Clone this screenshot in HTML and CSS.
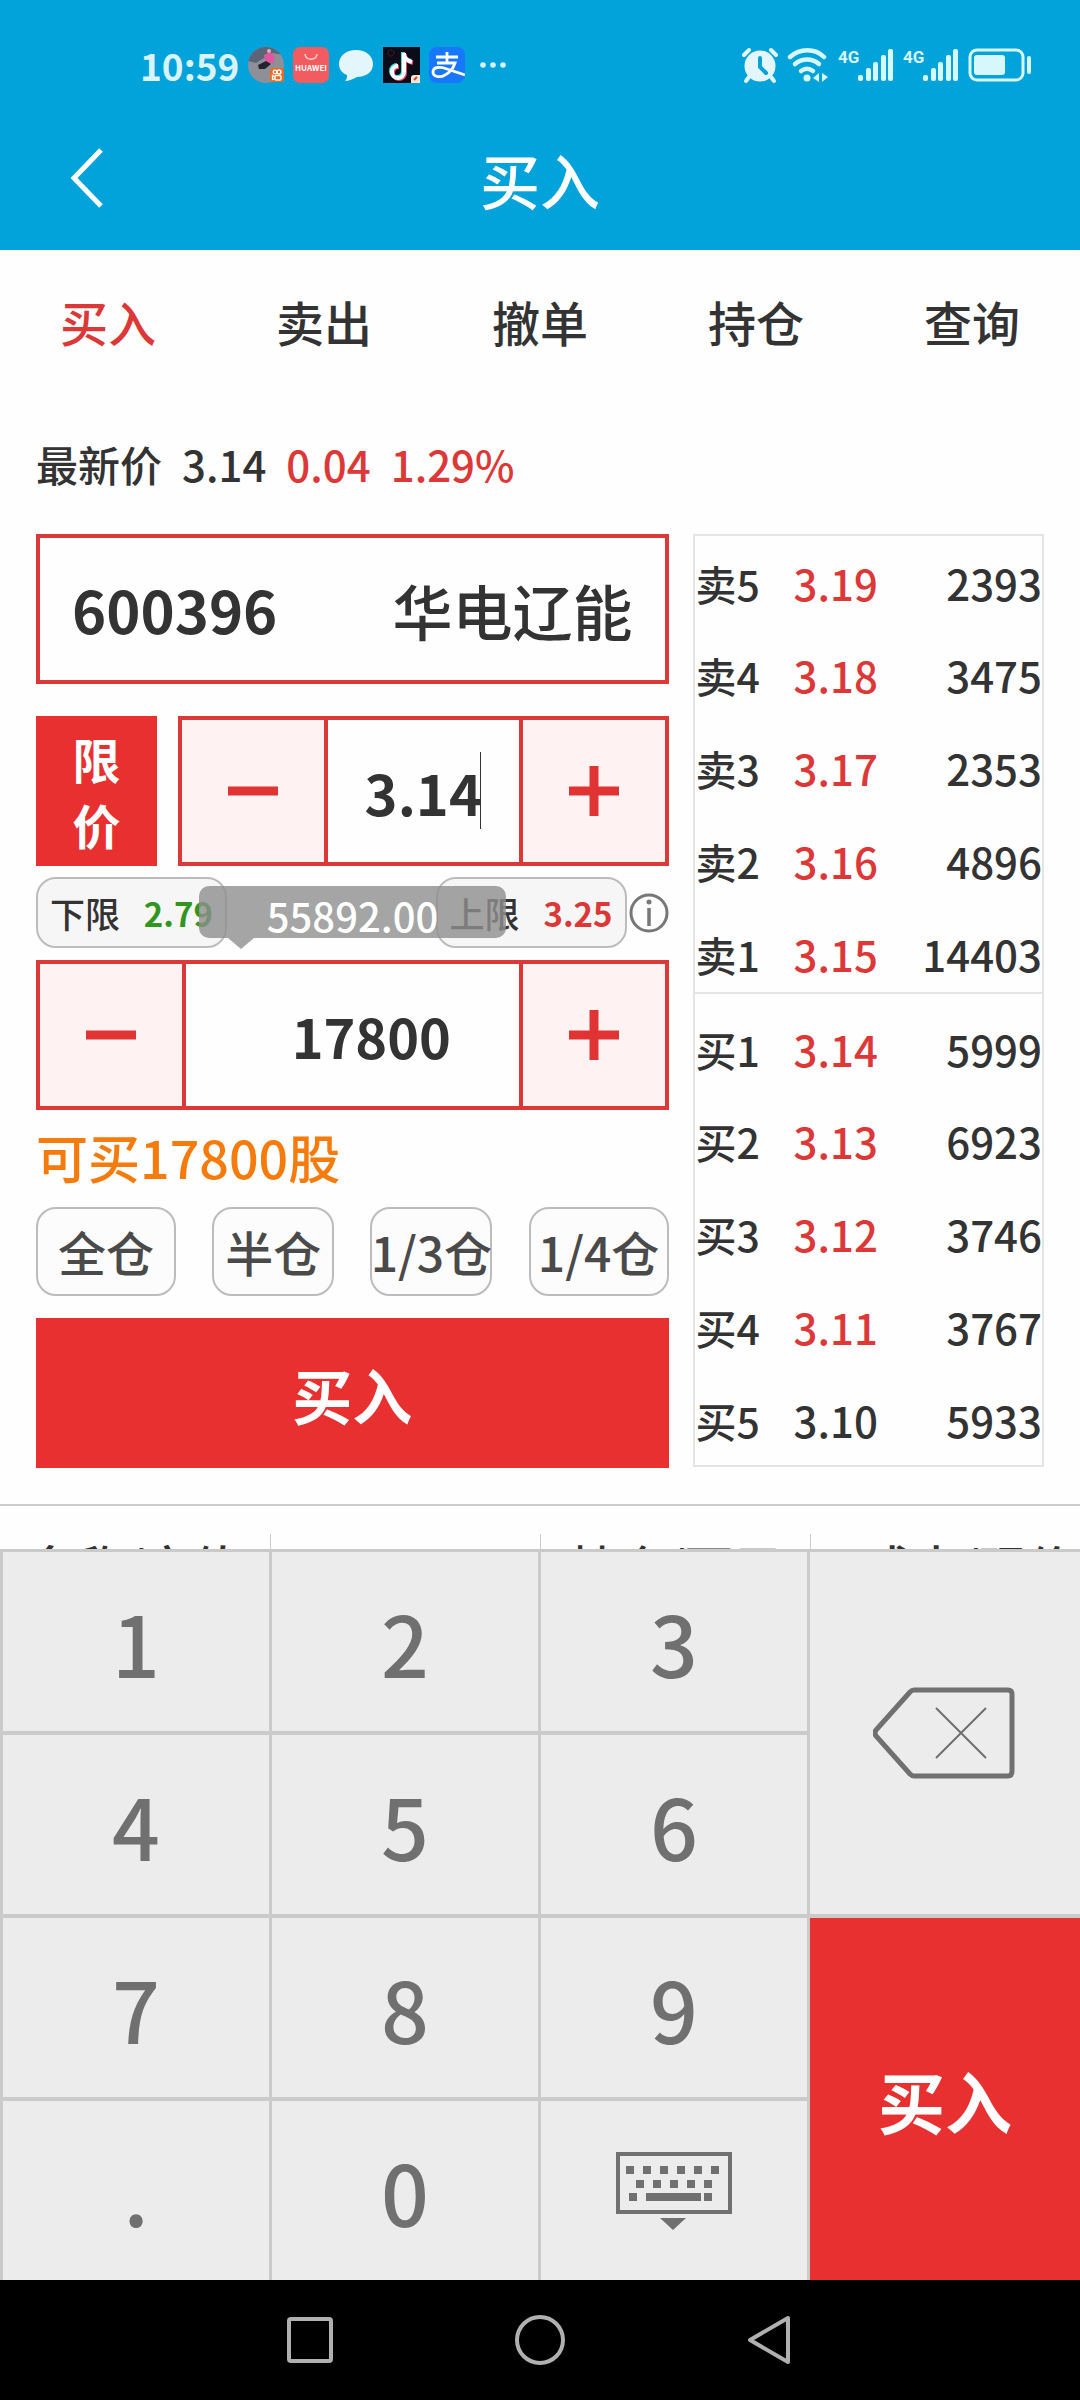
FILE: index.html
```html
<!DOCTYPE html>
<html lang="zh-CN">

<head>
    <meta charset="UTF-8">
    <meta name="viewport" content="width=device-width, initial-scale=1.0">
    <title>买入</title>
    <link rel="stylesheet" href="styles.css">
</head>

<body>
    <header class="top">
        <!-- Phone status bar -->
        <div class="status-bar">
            <div class="status-left">
                <span class="clock">10:59</span>
                <svg width="36" height="36" viewBox="0 0 36 36">
                    <defs>
                        <clipPath id="round"><circle cx="18" cy="18" r="18" /></clipPath>
                    </defs>
                    <g clip-path="url(#round)">
                        <rect width="36" height="36" fill="#8f8f98" />
                        <path d="M0 0h36v8L24 6 8 16 0 14z" fill="#5d6478" />
                        <path d="M16 8l6-3 5 5-2 6-7 1z" fill="#e0569f" />
                        <path d="M10 18l8-4 5 3-6 5-6 0z" fill="#23232f" />
                        <circle cx="21" cy="4" r="2" fill="#d9b4b0" />
                    </g>
                    <rect x="22" y="21" width="14" height="14" rx="3" fill="#ee6a1f" />
                    <g fill="none" stroke="#fff" stroke-width="1.3">
                        <circle cx="27" cy="25" r="1.8" />
                        <circle cx="31" cy="25" r="2" />
                        <rect x="27" y="28.5" width="6" height="4.5" rx="1" />
                        <path d="M27 30l-2.500-1.500v4L27 31.500" />
                    </g>
                </svg>
                <svg width="36" height="36" viewBox="0 0 36 36">
                    <rect width="36" height="36" rx="7" fill="#f25c60" />
                    <path d="M12 7c1 7 11 7 12 0" fill="none" stroke="#fbd0d0" stroke-width="1.500" />
                    <text x="18" y="24" class="brand" text-anchor="middle">HUAWEI</text>
                </svg>
                <svg width="36" height="36" viewBox="0 0 36 36">
                    <path d="M18 3c10 0 17 6 17 14s-7 13-16 13c-4 2-8 4-12 4 2-2 2-4 2-6-5-2-8-6-8-11C1 9 8 3 18 3z" fill="#e3f6fc" />
                </svg>
                <svg width="37" height="36" viewBox="0 0 37 36">
                    <rect width="37" height="36" fill="#0c0c18" />
                    <g fill="none" stroke-width="4">
                        <path d="M20 5v19a6 6 0 1 1-6-6M20 7c1 4 4 6 8 7" stroke="#3be0dc" />
                        <path d="M22 7v19a6 6 0 1 1-6-6M22 9c1 4 4 6 8 7" stroke="#f0415f" />
                        <path d="M21 6v19a6 6 0 1 1-6-6M21 8c1 4 4 6 8 7" stroke="#fff" />
                    </g>
                    <circle cx="8" cy="6" r="3" fill="none" stroke="#8c2030" stroke-dasharray="1 1" />
                    <path d="M28 36v-5q0-3 3-3h6v8z" fill="#f7e6d0" />
                    <path d="M31 33l3-3" stroke="#e04040" stroke-width="2" />
                </svg>
                <svg width="36" height="36" viewBox="0 0 36 36">
                    <rect width="36" height="36" rx="8" fill="#1777ff" />
                    <g fill="none" stroke="#fff" stroke-width="2.800">
                        <path d="M7 10h22M18 5v11M8 16h18c-2 6-6 10-10 12-5 3-12 2-12-3 0-6 9-5 14-3l18 6" />
                    </g>
                </svg>
                <svg class="more" width="26" height="6" viewBox="0 0 26 6" fill="#d9f3fb">
                    <circle cx="3" cy="3" r="2.800" />
                    <circle cx="13" cy="3" r="2.800" />
                    <circle cx="23" cy="3" r="2.800" />
                </svg>
            </div>
            <div class="status-right">
                <svg width="36" height="36" viewBox="0 0 36 36">
                    <circle cx="18" cy="19" r="15.500" fill="#e3f6fc" />
                    <path d="M2 8l5-5M34 8l-5-5M7 30l-3 4M29 30l3 4" stroke="#e3f6fc" stroke-width="4" stroke-linecap="round" />
                    <path d="M18 11v9l6 6" fill="none" stroke="#02a2da" stroke-width="4" stroke-linecap="round" />
                </svg>
                <svg width="42" height="36" viewBox="0 0 42 36">
                    <g fill="none" stroke="#d6f8fd" stroke-width="4.500" stroke-linecap="round">
                        <path d="M3 10c10-9 25-9 34 0" />
                        <path d="M8 17c7-6 17-6 24 0" />
                        <path d="M14 24c4-3 8-3 12 0" />
                    </g>
                    <circle cx="20" cy="31" r="3.500" fill="#d6f8fd" />
                    <path d="M32 26v9l-6-4zM35 26l6 4-6 5z" fill="#d6f8fd" />
                </svg>
                <svg width="56" height="36" viewBox="0 0 56 36" fill="#d6f8fd">
                    <text x="0" y="16" class="net">4G</text>
                    <rect x="20" y="28" width="5" height="6" rx="2" />
                    <rect x="28" y="21" width="5" height="13" rx="2" />
                    <rect x="35" y="15" width="5" height="19" rx="2" />
                    <rect x="43" y="8" width="5" height="26" rx="2" />
                    <rect x="50" y="2" width="5" height="32" rx="2" />
                </svg>
                <svg width="56" height="36" viewBox="0 0 56 36" fill="#d6f8fd">
                    <text x="0" y="16" class="net">4G</text>
                    <rect x="20" y="28" width="5" height="6" rx="2" />
                    <rect x="28" y="21" width="5" height="13" rx="2" />
                    <rect x="35" y="15" width="5" height="19" rx="2" />
                    <rect x="43" y="8" width="5" height="26" rx="2" />
                    <rect x="50" y="2" width="5" height="32" rx="2" />
                </svg>
                <svg width="64" height="36" viewBox="0 0 64 36" fill="#d6f8fd">
                    <rect x="2" y="3" width="53" height="30" rx="7" fill="none" stroke="#d6f8fd" stroke-width="3" />
                    <rect x="6" y="8" width="31" height="20" rx="3" />
                    <rect x="59" y="9" width="4" height="18" rx="2" />
                </svg>
            </div>
        </div>

        <!-- Page title -->
        <div class="title-bar">
            <button class="back" type="button" aria-label="返回">
                <svg width="36" height="64" viewBox="0 0 36 64">
                    <path d="M33 4L6 32l27 28" fill="none" stroke="#fff" stroke-width="5" />
                </svg>
            </button>
            <h1>买入</h1>
        </div>
    </header>

    <main>
        <nav class="tabs">
            <a class="active" href="#buy">买入</a>
            <a href="#sell">卖出</a>
            <a href="#cancel">撤单</a>
            <a href="#hold">持仓</a>
            <a href="#query">查询</a>
        </nav>

        <div class="quote">
            <span>最新价</span>
            <span>3.14</span>
            <span class="up">0.04</span>
            <span class="up">1.29%</span>
        </div>

        <section class="trade">
            <form class="order">
                <div class="stock">
                    <input class="code" type="text" value="600396" aria-label="股票代码">
                    <span>华电辽能</span>
                </div>

                <div class="price-row">
                    <button class="price-type" type="button">限<br>价</button>
                    <div class="stepper">
                        <button type="button" aria-label="减少价格">
                            <svg width="50" height="50" viewBox="0 0 50 50"><path d="M0 25h50" /></svg>
                        </button>
                        <div class="field">
                            <input type="text" value="3.14" aria-label="价格">
                            <span class="caret"></span>
                        </div>
                        <button type="button" aria-label="增加价格">
                            <svg width="50" height="50" viewBox="0 0 50 50"><path d="M0 25h50M25 0v50" /></svg>
                        </button>
                    </div>
                </div>

                <div class="limits">
                    <div class="limit">
                        <span>下限</span>
                        <b class="down">2.79</b>
                    </div>
                    <div class="limit">
                        <span>上限</span>
                        <b class="up">3.25</b>
                    </div>
                    <button class="info" type="button" aria-label="说明">
                        <svg width="40" height="40" viewBox="0 0 40 40">
                            <circle cx="20" cy="20" r="18" fill="none" stroke="#777" stroke-width="3" />
                            <circle cx="20" cy="9" r="2.500" fill="#777" />
                            <path d="M20 15v18" stroke="#777" stroke-width="3.500" />
                        </svg>
                    </button>
                    <div class="amount-tip">55892.00</div>
                </div>

                <div class="stepper quantity">
                    <button type="button" aria-label="减少数量">
                        <svg width="50" height="50" viewBox="0 0 50 50"><path d="M0 25h50" /></svg>
                    </button>
                    <div class="field">
                        <input type="text" value="17800" aria-label="数量">
                    </div>
                    <button type="button" aria-label="增加数量">
                        <svg width="50" height="50" viewBox="0 0 50 50"><path d="M0 25h50M25 0v50" /></svg>
                    </button>
                </div>

                <p class="available">可买17800股</p>

                <div class="portions">
                    <button type="button">全仓</button>
                    <button type="button">半仓</button>
                    <button type="button">1/3仓</button>
                    <button type="button">1/4仓</button>
                </div>

                <button class="submit" type="button">买入</button>
            </form>

            <table class="book">
                <tbody class="sell">
                    <tr><th>卖5</th><td class="up">3.19</td><td>2393</td></tr>
                    <tr><th>卖4</th><td class="up">3.18</td><td>3475</td></tr>
                    <tr><th>卖3</th><td class="up">3.17</td><td>2353</td></tr>
                    <tr><th>卖2</th><td class="up">3.16</td><td>4896</td></tr>
                    <tr><th>卖1</th><td class="up">3.15</td><td>14403</td></tr>
                </tbody>
                <tbody class="buy">
                    <tr><th>买1</th><td class="up">3.14</td><td>5999</td></tr>
                    <tr><th>买2</th><td class="up">3.13</td><td>6923</td></tr>
                    <tr><th>买3</th><td class="up">3.12</td><td>3746</td></tr>
                    <tr><th>买4</th><td class="up">3.11</td><td>3767</td></tr>
                    <tr><th>买5</th><td>3.10</td><td>5933</td></tr>
                </tbody>
            </table>
        </section>

        <!-- Holdings, mostly hidden behind the keypad -->
        <section class="holdings">
            <div>名称/市值</div>
            <div></div>
            <div>持仓/可用</div>
            <div class="cost">成本/现价</div>
        </section>
    </main>

    <div class="keypad">
        <button type="button">1</button>
        <button type="button">2</button>
        <button type="button">3</button>
        <button class="tall" type="button" aria-label="删除">
            <svg width="144" height="92" viewBox="0 0 144 92" fill="none" stroke="#707070">
                <path d="M41 3h94q4 0 4 4v77q0 5-4 5H41q-2 0-4-2L3 49q-2-3 0-6L37 5q2-2 4-2z" stroke-width="5" />
                <path d="M63 21l50 50M113 21L63 71" stroke-width="2" />
            </svg>
        </button>
        <button type="button">4</button>
        <button type="button">5</button>
        <button type="button">6</button>
        <button type="button">7</button>
        <button type="button">8</button>
        <button type="button">9</button>
        <button class="tall confirm" type="button">买入</button>
        <button type="button">.</button>
        <button type="button">0</button>
        <button type="button" aria-label="收起键盘">
            <svg width="116" height="80" viewBox="0 0 116 80" fill="#707070">
                <rect x="2" y="3" width="112" height="58" fill="none" stroke="#707070" stroke-width="4" />
                <path d="M10 15h8v8h-8zM27 15h8v8h-8zM44 15h8v8h-8zM61 15h8v8h-8zM78 15h8v8h-8zM95 15h8v8h-8z" />
                <path d="M20 29h8v8h-8zM37 29h8v8h-8zM54 29h8v8h-8zM71 29h8v8h-8zM88 29h8v8h-8z" />
                <path d="M13 42h8v8h-8zM30 42h55v8H30zM88 42h8v8h-8z" />
                <path d="M44 67h26L57 79z" />
            </svg>
        </button>
    </div>

    <!-- System navigation -->
    <footer class="system-nav">
        <button type="button" aria-label="最近任务">
            <svg width="52" height="52" viewBox="0 0 52 52"><rect x="5" y="5" width="42" height="42" rx="2" /></svg>
        </button>
        <button type="button" aria-label="主屏幕">
            <svg width="52" height="52" viewBox="0 0 52 52"><circle cx="26" cy="26" r="23" /></svg>
        </button>
        <button type="button" aria-label="返回">
            <svg width="52" height="52" viewBox="0 0 52 52"><path d="M44 4v44L6 26z" stroke-linejoin="round" /></svg>
        </button>
    </footer>
</body>

</html>
```
FILE: styles.css
```css
* {
    margin: 0;
    padding: 0;
    box-sizing: border-box;
}

body {
    display: flex;
    flex-direction: column;
    height: 100vh;
    background: #fefefe;
    color: #333;
    font-family: "Noto Sans CJK SC", "Noto Sans", sans-serif;
    font-weight: 500;
    overflow: hidden;
}

button,
input {
    border: none;
    border-radius: 0;
    background: none;
    color: inherit;
    font: inherit;
    outline: none;
}

button {
    display: flex;
    align-items: center;
    justify-content: center;
    cursor: pointer;
}

svg {
    display: block;
    flex: none;
}

a {
    color: inherit;
    text-decoration: none;
}

.up {
    color: #dc3838;
}

.down {
    color: #32961e;
}

/* Header */
.top {
    background: #02a2da;
    color: white;
}

.status-bar {
    display: flex;
    justify-content: space-between;
    padding: 45px 48px 31px 140px;
}

.status-left,
.status-right {
    display: flex;
    align-items: center;
    height: 40px;
    gap: 9px;
}

.clock {
    font-size: 37px;
    line-height: 37px;
    color: #d9f3fb;
    font-weight: 700;
}

.more {
    margin-left: 6px;
}

.brand {
    font-size: 8px;
    font-weight: 700;
    fill: white;
}

.net {
    font-family: Roboto, sans-serif;
    font-size: 17px;
    font-weight: 700;
}

.title-bar {
    display: grid;
    grid-template-columns: 120px 1fr 120px;
    align-items: center;
    height: 134px;
    padding-bottom: 10px;
}

.back {
    width: 120px;
    height: 120px;
    padding-left: 52px;
}

h1 {
    font-size: 60px;
    font-weight: 500;
    text-align: center;
}

/* Main content, the keypad covers whatever does not fit */
main {
    flex: 1 1 0;
    min-height: 0;
    overflow: hidden;
}

.tabs {
    display: grid;
    grid-template-columns: repeat(5, 1fr);
    padding-bottom: 8px;
    font-size: 48px;
    line-height: 142px;
    text-align: center;
}

.tabs .active {
    color: #dc3838;
}

.quote {
    display: flex;
    gap: 20px;
    padding: 0 36px 6px;
    font-size: 42px;
    line-height: 128px;
}

.trade {
    display: grid;
    grid-template-columns: 9fr 5fr;
    align-items: start;
    gap: 24px;
    padding: 0 36px 36px;
}

.order {
    display: flex;
    flex-direction: column;
    min-width: 0;
}

.stock {
    display: flex;
    align-items: center;
    justify-content: space-between;
    height: 150px;
    margin-bottom: 32px;
    padding: 0 32px;
    border: 4px solid #dc3838;
    font-size: 60px;
}

.code {
    width: 240px;
    font-size: 58px;
    font-weight: 700;
}

.price-row {
    display: flex;
    gap: 21px;
    height: 150px;
}

.price-type {
    width: 121px;
    background: #e83030;
    color: white;
    font-size: 48px;
    font-weight: 700;
    line-height: 66px;
}

.stepper {
    display: grid;
    grid-template-columns: 142px 1fr 142px;
    flex: 1;
    height: 150px;
    border: 4px solid #dc3838;
}

.stepper button {
    background: #fff2f2;
}

.stepper svg {
    stroke: #e03434;
    stroke-width: 9;
}

.field {
    position: relative;
    display: flex;
    min-width: 0;
    border: solid #dc3838;
    border-width: 0 4px;
}

.field input {
    width: 100%;
    font-size: 56px;
    font-weight: 700;
    text-align: center;
}

.caret {
    position: absolute;
    top: 32px;
    left: calc(50% + 57px);
    width: 1px;
    height: 77px;
    background: #333;
}

.limits {
    position: relative;
    display: flex;
    align-items: center;
    gap: 2px;
    margin: 11px 0 12px;
}

.limit {
    display: flex;
    align-items: center;
    justify-content: space-between;
    width: 191px;
    height: 71px;
    padding: 0 12px;
    border: 2px solid #bcbcbc;
    border-radius: 20px;
    background: #f6f6f6;
    font-size: 35px;
}

.limit b {
    font-size: 33px;
}

.limit:first-child {
    margin-right: auto;
}

/* Floating order amount */
.amount-tip {
    position: absolute;
    top: 9px;
    left: 163px;
    width: 307px;
    height: 52px;
    border-radius: 10px;
    background: rgba(143, 143, 143, 0.8);
    color: white;
    font-size: 40px;
    line-height: 58px;
    text-align: center;
}

.amount-tip::after {
    content: '';
    position: absolute;
    top: 52px;
    left: 29px;
    border: solid transparent;
    border-width: 11px 13px 0;
    border-top-color: rgba(143, 143, 143, 0.8);
}

.quantity {
    flex: none;
}

.quantity input {
    padding-left: 38px;
    font-size: 54px;
}

.available {
    padding-bottom: 4px;
    color: #f57c0c;
    font-size: 52px;
    line-height: 93px;
}

.portions {
    display: flex;
    justify-content: space-between;
    margin-bottom: 22px;
}

.portions button {
    width: 122px;
    height: 89px;
    padding-bottom: 2px;
    border: 2px solid #bcbcbc;
    border-radius: 20px;
    background: #fcfcfc;
    color: #4a4a4a;
    font-size: 48px;
    white-space: nowrap;
}

.portions button:first-child,
.portions button:last-child {
    width: 140px;
}

.submit {
    height: 150px;
    background: #e83030;
    color: white;
    font-size: 60px;
    font-weight: 700;
}

/* Order book */
.book {
    width: 100%;
    border: 2px solid #e4e4e4;
    border-collapse: collapse;
    font-size: 42px;
    line-height: 60px;
}

.book tr {
    height: 93px;
    vertical-align: top;
}

.book th,
.book td {
    padding-top: 17px;
}

.book th {
    width: 100px;
    padding-left: 1px;
    font-size: 41px;
    font-weight: 500;
    text-align: left;
}

.book td:last-child {
    text-align: right;
}

/* The divider sits close under the last sell row */
.sell tr:last-child {
    height: 86px;
}

.buy {
    border-top: 2px solid #e4e4e4;
}

.buy tr:first-child {
    height: 101px;
}

.buy tr:first-child > * {
    padding-top: 25px;
}

.holdings {
    display: grid;
    grid-template-columns: repeat(4, 1fr);
    padding-top: 28px;
    border-top: 2px solid #ccc;
    font-size: 48px;
    line-height: 62px;
    text-align: center;
}

.holdings div + div {
    border-left: 1px solid #ccc;
}

.holdings .cost {
    padding-left: 48px;
    white-space: nowrap;
}

/* Numeric keypad */
.keypad {
    display: grid;
    grid-template-columns: repeat(3, 1fr) 270px;
    grid-auto-rows: 179px;
    gap: 4px 3px;
    padding: 3px 0 0 3px;
    background: #cacaca;
}

.keypad button {
    background: #ececec;
    color: #707070;
    font-size: 84px;
}

.keypad .tall {
    grid-column: 4;
    grid-row: span 2;
}

.keypad .confirm {
    background: #e83030;
    color: white;
    font-size: 67px;
    font-weight: 700;
}

.system-nav {
    display: flex;
    justify-content: center;
    gap: 178px;
    height: 120px;
    background: black;
}

.system-nav svg {
    fill: none;
    stroke: #b0b0b0;
    stroke-width: 4;
}
```
